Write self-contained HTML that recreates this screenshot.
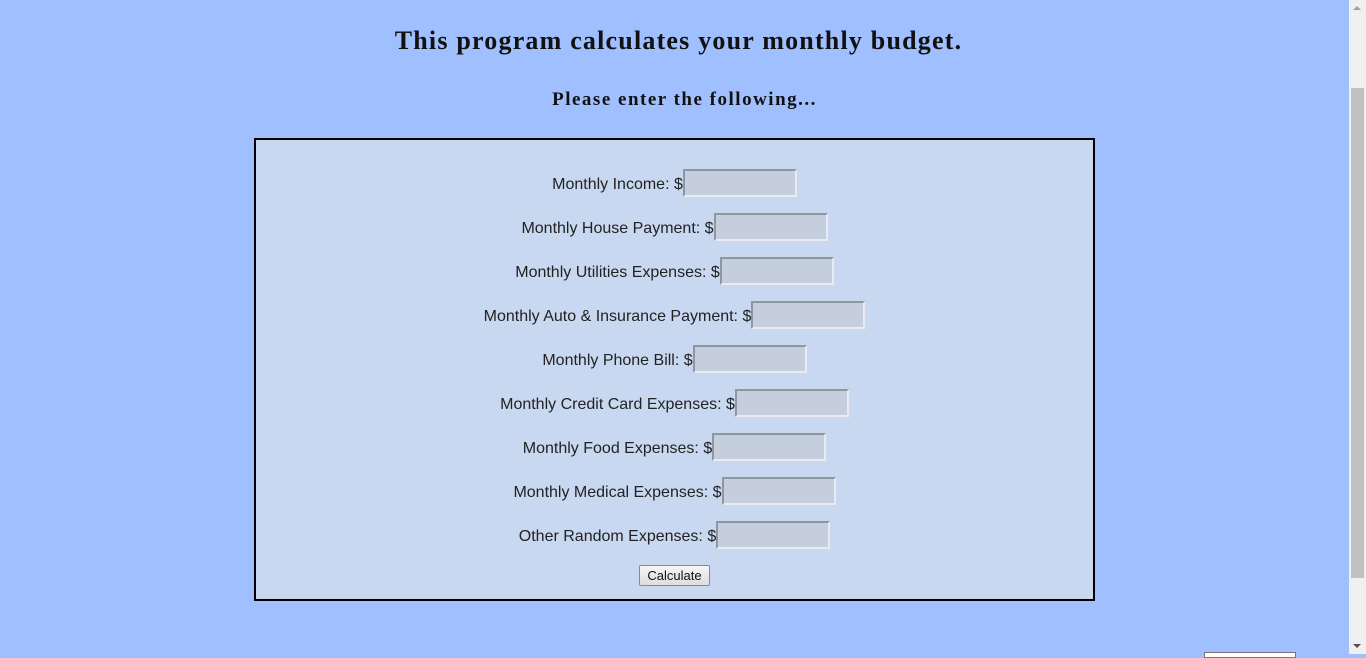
<!DOCTYPE html>
<html><head><style>
html,body{margin:0;padding:0;}
body{width:1366px;height:654px;background:#a0bfff;position:relative;overflow:hidden;font-family:"Liberation Sans",Arial,sans-serif;}
h1{position:absolute;top:26px;left:4px;width:1349px;margin:0;text-align:center;font-family:"Liberation Serif",serif;font-weight:bold;font-size:26px;letter-spacing:1.2px;color:#111;}
h2{position:absolute;top:89px;left:10px;width:1349px;margin:0;text-align:center;font-family:"Liberation Serif",serif;font-weight:bold;font-size:19px;letter-spacing:1.5px;color:#111;}
.box{position:absolute;left:254px;top:138px;width:837px;height:459px;border:2px solid #000;background:#c9d8f1;}
.row{position:absolute;left:0;width:837px;height:28px;display:flex;justify-content:center;align-items:center;font-size:16px;color:#222;}
.row b{font-weight:normal;position:relative;top:2px;}
.in{width:110px;height:24px;background:#c5cedd;border:2px solid;border-color:#8e96a2 #e8ecf2 #e8ecf2 #8e96a2;}
.btn{position:absolute;left:383px;top:425px;width:69px;height:19px;border:1px solid #8a8a8a;border-radius:2px;background:linear-gradient(#f6f6f6,#dddddd);font-size:13px;color:#111;text-align:center;line-height:19px;}
.sb{position:absolute;left:1349px;top:0;width:17px;height:654px;background:#f0f0f0;}
.th{position:absolute;left:1351px;top:88px;width:13px;height:490px;background:#c1c1c1;}
.ar{position:absolute;left:1353px;top:644px;width:0;height:0;border-left:4px solid transparent;border-right:4px solid transparent;border-top:4px solid #505050;}
.ar2{position:absolute;left:1353px;top:6px;width:0;height:0;border-left:4px solid transparent;border-right:4px solid transparent;border-bottom:4px solid #a0a0a0;}
.stub{position:absolute;left:1204px;top:652px;width:90px;height:4px;border:1px solid #777;background:#fff;}
</style></head><body>
<h1>This program calculates your monthly budget.</h1>
<h2>Please enter the following...</h2>
<div class="box">
<div class="row" style="top:29px"><b>Monthly Income: $</b><span class="in"></span></div>
<div class="row" style="top:73px"><b>Monthly House Payment: $</b><span class="in"></span></div>
<div class="row" style="top:117px"><b>Monthly Utilities Expenses: $</b><span class="in"></span></div>
<div class="row" style="top:161px"><b>Monthly Auto &amp; Insurance Payment: $</b><span class="in"></span></div>
<div class="row" style="top:205px"><b>Monthly Phone Bill: $</b><span class="in"></span></div>
<div class="row" style="top:249px"><b>Monthly Credit Card Expenses: $</b><span class="in"></span></div>
<div class="row" style="top:293px"><b>Monthly Food Expenses: $</b><span class="in"></span></div>
<div class="row" style="top:337px"><b>Monthly Medical Expenses: $</b><span class="in"></span></div>
<div class="row" style="top:381px"><b>Other Random Expenses: $</b><span class="in"></span></div>
<div class="btn">Calculate</div>
</div>
<div class="stub"></div>
<div class="sb"></div><div class="th"></div><div class="ar2"></div><div class="ar"></div>
</body></html>
